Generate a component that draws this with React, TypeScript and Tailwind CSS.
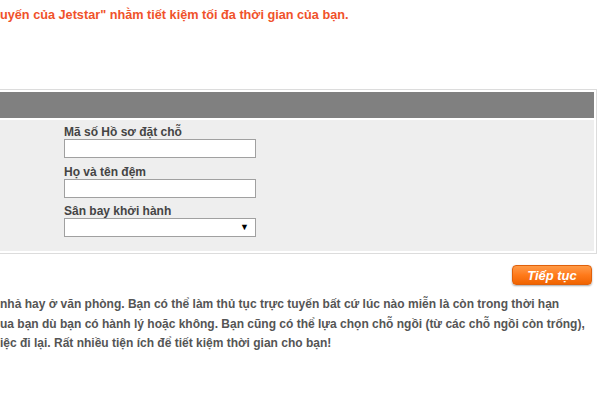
export default function App() {
  return (
    <div className="w-[600px] h-[400px] overflow-hidden bg-white font-['Liberation_Sans',Arial,sans-serif]">
      {/* intro line, cut at the left edge */}
      <p className="pt-[8px] text-[12.7px] leading-[15px] font-bold text-[#f0522a] whitespace-nowrap">
        uyến của Jetstar" nhằm tiết kiệm tối đa thời gian của bạn.
      </p>

      {/* form panel */}
      <div className="mt-[66px] -ml-[20px] w-[617px] border border-[#dcdcdc] p-[2px] bg-white">
        <div className="h-[26px] bg-[#808080]" />
        <div className="mt-[2px] bg-[#eeeeee] pl-[82px] pt-[5px] pb-[14px] text-[12px] font-bold text-[#444]">
          <div className="-ml-[1px] leading-[14px]">Mã số Hồ sơ đặt chỗ</div>
          <input className="block -ml-[1px] w-[192px] h-[19px] border border-[#a0a0a0] bg-white outline-none" />
          <div className="-ml-[1px] mt-[7px] leading-[14px]">Họ và tên đệm</div>
          <input className="block -ml-[1px] w-[192px] h-[19px] border border-[#a0a0a0] bg-white outline-none" />
          <div className="-ml-[1px] mt-[6px] leading-[14px]">Sân bay khởi hành</div>
          <div className="-ml-[1px] flex w-[192px] h-[19px] items-center justify-end border border-[#a0a0a0] bg-white pr-[6px]">
            <span className="text-[9px] text-black leading-none">▼</span>
          </div>
        </div>
      </div>

      {/* continue button */}
      <div className="flex justify-end pr-[8px] mt-[11px]">
        <button className="w-[80px] h-[20px] rounded-[4px] border border-[#e0600a] bg-gradient-to-b from-[#ff9a45] via-[#ff7a1a] to-[#f06400] shadow-[0_1px_2px_rgba(0,0,0,0.35)] text-white text-[13px] font-bold italic leading-none">
          Tiếp tục
        </button>
      </div>

      {/* description text, cut at the left edge */}
      <div className="mt-[10px] text-[12px] leading-[19.5px] font-bold text-[#555] whitespace-nowrap">
        <div>nhả hay ở văn phòng. Bạn có thể làm thủ tục trực tuyến bất cứ lúc nào miễn là còn trong thời hạn</div>
        <div>ua bạn dù bạn có hành lý hoặc không. Bạn cũng có thể lựa chọn chỗ ngồi (từ các chỗ ngồi còn trống),</div>
        <div>iệc đi lại. Rất nhiều tiện ích để tiết kiệm thời gian cho bạn!</div>
      </div>
    </div>
  )
}
